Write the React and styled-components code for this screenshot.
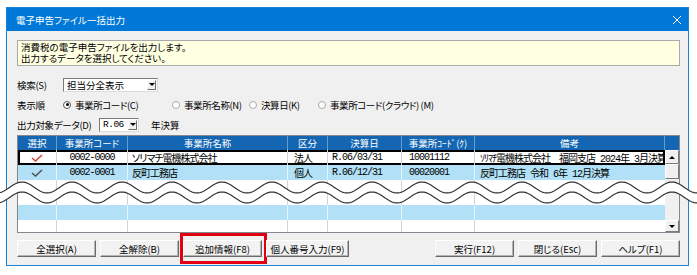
import React from 'react';
import styled, { createGlobalStyle } from 'styled-components';


// fonts
const UI_FONT = `"Noto Sans CJK JP", "Noto Sans", sans-serif`;
const DATA_FONT = `"Liberation Mono", "Noto Sans CJK JP", monospace`;
const COLS = '39px 71px 160px 40px 74px 73px 190px';


// global
const GlobalStyle = createGlobalStyle`
  html, body {
    margin: 0;
    background: #fff;
  }
  body {
    font-family: ${UI_FONT};
    font-size: 9.5px;
    font-feature-settings: "palt" 1;
    color: #000;
  }
`


// styled-components
const Page = styled.div`
  position: relative;
  width: 697px;
  height: 275px;
  box-sizing: border-box;
  padding: 7px 8px 9px 6px;
  overflow: hidden;
`

const Window = styled.div`
  height: 100%;
  box-sizing: border-box;
  border: 1px solid #1883d7;
  display: flex;
  flex-direction: column;
`

const TitleBar = styled.div`
  height: 23px;
  flex: none;
  background: #0078d7;
  color: #fff;
  display: flex;
  align-items: center;
  justify-content: space-between;
  padding: 0 6px 0 9px;
`

const Body = styled.div`
  flex: 1;
  background: #f0f0f0;
  padding: 9px 8px 0 10px;
  display: flex;
  flex-direction: column;
`

const Message = styled.div`
  height: 26px;
  box-sizing: border-box;
  background: #ffffe1;
  border: 1px solid #a9a9a9;
  padding: 0 3px;
  display: flex;
  flex-direction: column;
  justify-content: center;
`

const MessageLine = styled.div`
  height: 11.5px;
  line-height: 11.5px;
  white-space: nowrap;
`

const FormRow = styled.div`
  height: 15px;
  margin-top: ${p => p.$gap}px;
  display: flex;
  align-items: center;
`

const Label = styled.span`
  width: ${p => p.$w}px;
  flex: none;
  white-space: nowrap;
  letter-spacing: -0.3px;
`

const Combo = styled.div`
  width: ${p => p.$w}px;
  height: 14px;
  flex: none;
  box-sizing: border-box;
  display: flex;
  align-items: center;
  background: #fff;
  border: 1px solid;
  border-color: #7a7a7a #dcdcdc #dcdcdc #7a7a7a;
  padding-left: 3px;
  white-space: nowrap;
  font-family: ${p => p.$mono ? DATA_FONT : UI_FONT};
  letter-spacing: ${p => p.$mono ? '-0.5px' : '0'};
`

const ComboArrow = styled.span`
  margin-left: auto;
  margin-right: 1px;
  width: 9px;
  height: 10px;
  box-sizing: border-box;
  border: 1px solid;
  border-color: #fff #6d6d6d #6d6d6d #fff;
  background: #f0f0f0;
  display: flex;
  align-items: center;
  justify-content: center;

  &::after {
    content: '';
    border-left: 3px solid transparent;
    border-right: 3px solid transparent;
    border-top: 3px solid #000;
  }
`

const RadioOption = styled.label`
  width: ${p => p.$w}px;
  flex: none;
  display: flex;
  align-items: center;
  gap: 4px;
  white-space: nowrap;
  letter-spacing: -0.4px;
`

const RadioDot = styled.span`
  width: 8px;
  height: 8px;
  flex: none;
  box-sizing: border-box;
  border-radius: 50%;
  border: 1px solid ${p => p.$on ? '#555' : '#aaa'};
  background: #fff;
  display: flex;
  align-items: center;
  justify-content: center;

  &::after {
    content: '';
    width: 3px;
    height: 3px;
    border-radius: 50%;
    background: ${p => p.$on ? '#000' : 'transparent'};
  }
`

const Suffix = styled.span`
  margin-left: 12px;
`

const Table = styled.div`
  margin-top: 3px;
  height: 98px;
  box-sizing: border-box;
  border: 1px solid #828790;
  display: flex;
  flex-direction: column;
  background: #fff;
`

const HeaderRow = styled.div`
  height: 14px;
  flex: none;
  display: grid;
  grid-template-columns: ${COLS} 1fr;
  background: #1466b2;
  color: #fff;
`

const HeadCell = styled.div`
  display: flex;
  align-items: center;
  justify-content: center;
  border-right: 1px solid rgba(255, 255, 255, 0.35);
  white-space: nowrap;
  overflow: hidden;

  &:last-child {
    border-right: none;
  }
`

const Grid = styled.div`
  flex: 1;
  display: flex;
`

const Rows = styled.div`
  width: 647px;
  display: flex;
  flex-direction: column;
`

const Row = styled.div`
  height: ${p => p.$h}px;
  flex: none;
  display: grid;
  grid-template-columns: ${COLS};
  background: ${p => p.$tone === 'blue' ? '#b2e0f7' : '#fff'};
  box-shadow: ${p => p.$selected ? 'inset 0 0 0 2px #000' : 'none'};
  font-family: ${DATA_FONT};
  font-size: 10px;
  letter-spacing: -1px;
`

const Cell = styled.div`
  display: flex;
  align-items: center;
  justify-content: ${p => p.$align === 'center' ? 'center' : 'flex-start'};
  padding: 0 ${p => p.$pad ?? 4}px;
  border-right: 1px solid ${p => p.$tone === 'blue' ? '#e6f5fc' : '#d4d4d4'};
  white-space: nowrap;
  overflow: hidden;

  &:last-child {
    border-right: none;
  }
`

const ScrollBar = styled.div`
  flex: 1;
  display: flex;
  flex-direction: column;
  background: #f0f0f0;
`

const ScrollBtn = styled.div`
  height: ${p => p.$h}px;
  flex: none;
  box-sizing: border-box;
  border: 1px solid;
  border-color: #fff #7a7a7a #7a7a7a #fff;
  background: #f0f0f0;
  display: flex;
  align-items: center;
  justify-content: center;

  &::after {
    content: '';
    display: ${p => p.$dir ? 'block' : 'none'};
    border-left: 3px solid transparent;
    border-right: 3px solid transparent;
    border-bottom: ${p => p.$dir === 'up' ? '3px solid #000' : 'none'};
    border-top: ${p => p.$dir === 'down' ? '3px solid #000' : 'none'};
  }
`

const Track = styled.div`
  flex: 1;
`

const ButtonBar = styled.div`
  margin-top: 7px;
  height: 17px;
  display: flex;
  gap: 4px;
`

const Spacer = styled.div`
  flex: 1;
`

const Button = styled.button`
  position: relative;
  width: ${p => p.$w ?? 79}px;
  height: 17px;
  padding: 0;
  white-space: nowrap;
  font-family: ${UI_FONT};
  font-size: 9.5px;
  font-feature-settings: "palt" 1;
  color: #000;
  background: #f2f2f2;
  border: 1px solid;
  border-color: #fff #6a6a6a #6a6a6a #fdfdfd;
  box-shadow: inset -1px -1px 0 #b4b4b4;

  &::after {
    content: '';
    display: ${p => p.$marked ? 'block' : 'none'};
    position: absolute;
    top: -8px;
    bottom: -8px;
    left: -4px;
    right: -6px;
    border: 3px solid #e00012;
  }
`

const Wave = styled.svg`
  position: absolute;
  left: 0;
  top: 179px;
`


// data
const headers = ['選択', '事業所コード', '事業所名称', '区分', '決算日', '事業所ｺｰﾄﾞ(ｸ)', '備考'];

const rows = [
  {
    check: '#d6473b', code: '0002-0000', name: 'ソリマチ電機株式会社', kind: '法人',
    date: 'R.06/03/31', cloud: '10001112', note: 'ｿﾘﾏﾁ電機株式会社　福岡支店 2024年 3月決算',
    tone: 'white', selected: true,
  },
  {
    check: '#555', code: '0002-0001', name: '反町工務店', kind: '個人',
    date: 'R.06/12/31', cloud: '00020001', note: '反町工務店 令和 6年 12月決算',
    tone: 'blue',
  },
];

const emptyRows = [
  { tone: 'white', h: 25 },
  { tone: 'blue', h: 15 },
  { tone: 'white', h: 12 },
];


// helpers
const wavePoints = (cy, amp, width) => {
  const pts = [];
  for (let x = 0; x <= width; x += 2) {
    pts.push([x, cy - amp * Math.cos((2 * Math.PI * (x - 22)) / 50)]);
  }
  return pts;
};

const toPath = pts => pts.map(([x, y], i) => `${i ? 'L' : 'M'}${x} ${y.toFixed(2)}`).join(' ');


// components
const Check = ({ color }) => (
  <svg width="12" height="8" viewBox="0 0 12 8">
    <path d="M1 4 L4.5 7 L11 1" fill="none" stroke={color} strokeWidth="1.6" />
  </svg>
);

const CloseIcon = () => (
  <svg width="10" height="10" viewBox="0 0 10 10">
    <path d="M1 1 L9 9 M9 1 L1 9" stroke="#fff" strokeWidth="1" />
  </svg>
);

const BreakLines = () => {
  const top = wavePoints(8.5, 5.5, 698);
  const bottom = wavePoints(18.5, 5.5, 698);
  const fill = toPath(top) + ' ' + toPath([...bottom].reverse()).replace('M', 'L') + ' Z';
  return (
    <Wave width="697" height="28" viewBox="0 0 697 28">
      <path d={fill} fill="#fff" />
      <path d={toPath(top)} fill="none" stroke="#333" strokeWidth="1.2" />
      <path d={toPath(bottom)} fill="none" stroke="#333" strokeWidth="1.2" />
    </Wave>
  );
};

const DataRow = ({ row }) => (
  <Row $h={15} $tone={row.tone} $selected={row.selected}>
    <Cell $tone={row.tone} $align="center"><Check color={row.check} /></Cell>
    <Cell $tone={row.tone} $align="center">{row.code}</Cell>
    <Cell $tone={row.tone} $pad={4}>{row.name}</Cell>
    <Cell $tone={row.tone} $pad={6}>{row.kind}</Cell>
    <Cell $tone={row.tone} $pad={4}>{row.date}</Cell>
    <Cell $tone={row.tone} $pad={7}>{row.cloud}</Cell>
    <Cell $tone={row.tone} $pad={5}>{row.note}</Cell>
  </Row>
);

const App = () => {
  return (
    <Page>
      <GlobalStyle />
      <Window>
        <TitleBar>
          <span>電子申告ファイル一括出力</span>
          <CloseIcon />
        </TitleBar>
        <Body>
          <Message>
            <MessageLine>消費税の電子申告ファイルを出力します。</MessageLine>
            <MessageLine>出力するデータを選択してください。</MessageLine>
          </Message>

          <FormRow $gap={11}>
            <Label $w={46}>検索(S)</Label>
            <Combo $w={95}>担当分全表示<ComboArrow /></Combo>
          </FormRow>

          <FormRow $gap={5}>
            <Label $w={46}>表示順</Label>
            <RadioOption $w={109}><RadioDot $on />事業所コード(C)</RadioOption>
            <RadioOption $w={77}><RadioDot />事業所名称(N)</RadioOption>
            <RadioOption $w={69}><RadioDot />決算日(K)</RadioOption>
            <RadioOption $w={140}><RadioDot />事業所コード(クラウド) (M)</RadioOption>
          </FormRow>

          <FormRow $gap={5}>
            <Label $w={82}>出力対象データ(D)</Label>
            <Combo $w={40} $mono>R.06<ComboArrow /></Combo>
            <Suffix>年決算</Suffix>
          </FormRow>

          <Table>
            <HeaderRow>
              {headers.map(h => <HeadCell key={h}>{h}</HeadCell>)}
              <HeadCell />
            </HeaderRow>
            <Grid>
              <Rows>
                {rows.map(r => <DataRow key={r.code} row={r} />)}
                {emptyRows.map((r, i) => (
                  <Row key={i} $h={r.h} $tone={r.tone}>
                    {headers.map(h => <Cell key={h} $tone={r.tone} />)}
                  </Row>
                ))}
              </Rows>
              <ScrollBar>
                <ScrollBtn $h={14} $dir="up" />
                <ScrollBtn $h={15} />
                <Track />
                <ScrollBtn $h={12} $dir="down" />
              </ScrollBar>
            </Grid>
          </Table>

          <ButtonBar>
            <Button>全選択(A)</Button>
            <Button>全解除(B)</Button>
            <Button $marked>追加情報(F8)</Button>
            <Button $w={83}>個人番号入力(F9)</Button>
            <Spacer />
            <Button>実行(F12)</Button>
            <Button>閉じる(Esc)</Button>
            <Button>ヘルプ(F1)</Button>
          </ButtonBar>
        </Body>
      </Window>
      <BreakLines />
    </Page>
  );
}


export default App;
